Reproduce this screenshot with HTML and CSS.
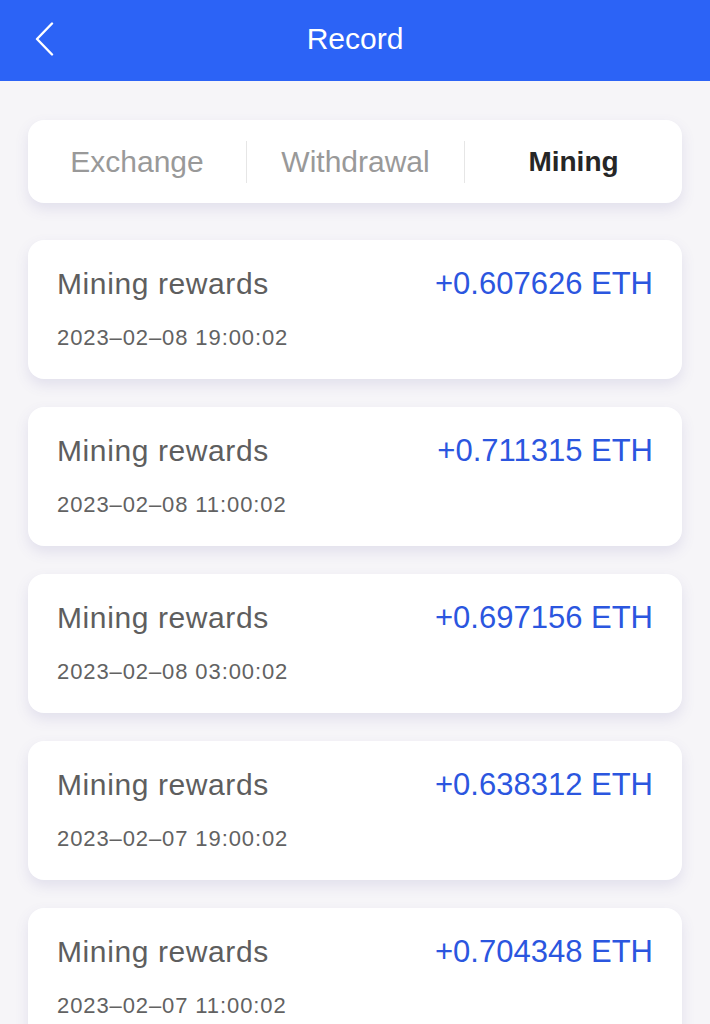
FILE: index.html
```html
<!DOCTYPE html>
<html lang="en">
<head>
<meta charset="utf-8">
<title>Record</title>
<link rel="stylesheet" href="styles.css">
</head>
<body>
<header class="topbar">
  <span class="back">
    <svg width="20" height="34" viewBox="0 0 20 34" fill="none"><path d="M18 1.5 L3 17 L18 32.5" stroke="#fff" stroke-width="2.4" stroke-linecap="round" stroke-linejoin="round"/></svg>
  </span>
  <h1 class="title">Record</h1>
</header>
<main class="content">
  <nav class="tabs">
    <div class="tab">Exchange</div>
    <div class="tab">Withdrawal</div>
    <div class="tab active">Mining</div>
  </nav>
  <section class="list">
    <div class="card">
      <div class="row"><span class="label">Mining rewards</span><span class="amount">+0.607626 ETH</span></div>
      <div class="date">2023–02–08 19:00:02</div>
    </div>
    <div class="card">
      <div class="row"><span class="label">Mining rewards</span><span class="amount">+0.711315 ETH</span></div>
      <div class="date">2023–02–08 11:00:02</div>
    </div>
    <div class="card">
      <div class="row"><span class="label">Mining rewards</span><span class="amount">+0.697156 ETH</span></div>
      <div class="date">2023–02–08 03:00:02</div>
    </div>
    <div class="card">
      <div class="row"><span class="label">Mining rewards</span><span class="amount">+0.638312 ETH</span></div>
      <div class="date">2023–02–07 19:00:02</div>
    </div>
    <div class="card">
      <div class="row"><span class="label">Mining rewards</span><span class="amount">+0.704348 ETH</span></div>
      <div class="date">2023–02–07 11:00:02</div>
    </div>
  </section>
</main>
</body>
</html>
```
FILE: styles.css
```css
* { box-sizing: border-box; }
html, body {
  margin: 0;
  padding: 0;
  background: #f6f5f8;
  font-family: "Liberation Sans", Arial, sans-serif;
  overflow: hidden;
  height: 1024px;
}
.topbar {
  height: 81px;
  background: #2c63f6;
  display: flex;
  align-items: center;
  justify-content: center;
  position: relative;
}
.back {
  position: absolute;
  left: 34px;
  top: 22px;
  width: 20px;
  height: 34px;
  display: block;
}
.back svg { display: block; }
.title {
  margin: 0;
  color: #fff;
  font-size: 30px;
  font-weight: 400;
  line-height: 36px;
  margin-top: -3px;
}
.content {
  padding: 39px 28px 0;
}
.tabs {
  height: 83px;
  background: #fff;
  border-radius: 16px;
  display: grid;
  grid-template-columns: 1fr 1fr 1fr;
  align-items: center;
  box-shadow: 0 6px 14px rgba(95, 85, 160, 0.13);
}
.tab {
  text-align: center;
  font-size: 30px;
  color: #999;
  line-height: 42px;
  border-left: 1.5px solid #e6e6e6;
}
.tab:first-child { border-left: none; }
.tab.active {
  color: #262626;
  font-weight: 700;
  font-size: 28px;
}
.list {
  margin-top: 37px;
  display: flex;
  flex-direction: column;
  gap: 28px;
}
.card {
  background: #fff;
  border-radius: 16px;
  height: 139px;
  padding: 26px 29px 0 29px;
  box-shadow: 0 6px 14px rgba(95, 85, 160, 0.13);
}
.row {
  display: flex;
  justify-content: space-between;
  align-items: baseline;
  height: 36px;
}
.label {
  font-size: 30px;
  line-height: 36px;
  color: #5e5e5e;
  letter-spacing: 0.6px;
}
.amount {
  font-size: 31px;
  line-height: 36px;
  color: #2b56df;
}
.date {
  margin-top: 23px;
  font-size: 22px;
  line-height: 26px;
  color: #626262;
  letter-spacing: 0.9px;
}
```
